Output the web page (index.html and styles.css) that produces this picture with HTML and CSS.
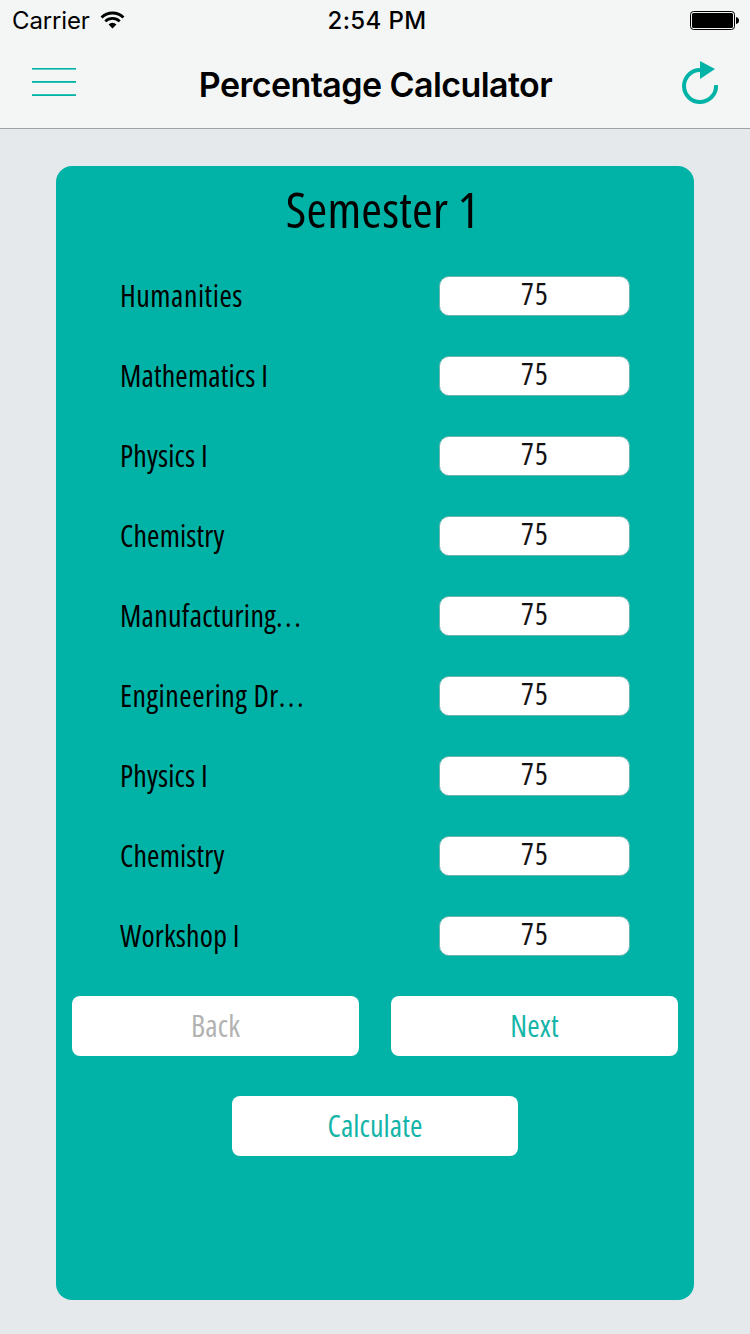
FILE: index.html
```html
<!DOCTYPE html>
<html lang="en">
<head>
<meta charset="utf-8">
<title>Percentage Calculator</title>
<link rel="stylesheet" href="styles.css">
</head>
<body>
<header class="top">
  <div class="status">
    <div class="status-left">
      <span class="carrier">Carrier</span>
      <svg class="wifi" width="25" height="20" viewBox="0 0 26 20" fill="none" stroke="#000">
        <path d="M1.600 7.400a16.300 16.300 0 0 1 22.800 0" stroke-width="3"/>
        <path d="M5.500 11.400a10.800 10.800 0 0 1 15 0" stroke-width="2.800"/>
        <path d="M13 18.800l-4.100-4.200a6 6 0 0 1 8.200 0z" fill="#000" stroke="none"/>
      </svg>
    </div>
    <span class="time">2:54 PM</span>
    <svg class="battery" width="50" height="20" viewBox="0 0 50 20">
      <rect x=".5" y="1.500" width="44" height="18" rx="3" fill="none" stroke="#000"/>
      <rect x="2" y="3" width="41" height="15" rx="1.500"/>
      <path d="M46 7q3 .5 3 3.500t-3 3.500z"/>
    </svg>
  </div>
  <nav class="bar">
    <svg class="menu" width="44" height="30" viewBox="0 0 44 30" fill="#01b3a6">
      <rect y="1" width="44" height="1.600"/>
      <rect y="14" width="44" height="1.800"/>
      <rect y="27.200" width="44" height="1.800"/>
    </svg>
    <h1 class="title">Percentage Calculator</h1>
    <svg class="refresh" width="38" height="44" viewBox="0 0 38 44">
      <path d="M35 24a16 16 0 1 1-16-15" fill="none" stroke="#01b3a6" stroke-width="4"/>
      <path d="M19 0l15 8-15 10z" fill="#01b3a6"/>
    </svg>
  </nav>
</header>
<main class="card">
  <h2 class="semester">Semester 1</h2>
  <ul class="subjects">
    <li class="row"><span class="label wide">Humanities</span><span class="field">75</span></li>
    <li class="row"><span class="label">Mathematics I</span><span class="field">75</span></li>
    <li class="row"><span class="label">Physics I</span><span class="field">75</span></li>
    <li class="row"><span class="label">Chemistry</span><span class="field">75</span></li>
    <li class="row"><span class="label clipped">Manufacturing<span class="dots">...</span></span><span class="field">75</span></li>
    <li class="row"><span class="label wide">Engineering Dr<span class="dots">...</span></span><span class="field">75</span></li>
    <li class="row"><span class="label">Physics I</span><span class="field">75</span></li>
    <li class="row"><span class="label">Chemistry</span><span class="field">75</span></li>
    <li class="row"><span class="label">Workshop I</span><span class="field">75</span></li>
  </ul>
  <div class="actions">
    <button class="btn disabled">Back</button>
    <button class="btn">Next</button>
  </div>
  <button class="btn calculate">Calculate</button>
</main>
</body>
</html>
```
FILE: styles.css
```css
* { box-sizing: border-box; margin: 0; padding: 0; }

body {
  width: 750px;
  height: 1334px;
  overflow: hidden;
  background: #e5e9ec;
  color: #000;
  font-family: "Open Sans", sans-serif;
  font-stretch: 75%;
}

svg { display: block; }

.top {
  height: 129px;
  background: #f4f6f5;
  border-bottom: 1px solid #9fa4a8;
  font-family: Inter, sans-serif;
  font-stretch: 100%;
}

.status {
  display: grid;
  grid-template-columns: 1fr auto 1fr;
  align-items: center;
  height: 40px;
  padding: 0 10px 0 12px;
  font-size: 24px;
  line-height: 38px;
}
.status-left { display: flex; align-items: center; gap: 10px; }
.carrier { padding-top: 2px; letter-spacing: -0.15px; }
.time { padding: 2px 0 0 2px; font-weight: 500; letter-spacing: 0.35px; }
.battery { justify-self: end; }

.bar {
  display: grid;
  grid-template-columns: 44px 1fr 38px;
  align-items: center;
  height: 88px;
  padding: 0 31px 0 32px;
}
.menu { margin-top: -6px; }
.title {
  padding-right: 6px;
  text-align: center;
  font-size: 34px;
  font-weight: 600;
  line-height: 90px;
  letter-spacing: -0.57px;
}
.refresh { margin-top: -4px; }

.card {
  display: flex;
  flex-direction: column;
  width: 638px;
  height: 1134px;
  margin: 37px 0 0 56px;
  padding: 0 16px;
  border-radius: 16px;
  background: #01b3a6;
}

.semester {
  height: 90px;
  padding-left: 15px;
  text-align: center;
  font-size: 50px;
  font-weight: 400;
  line-height: 86px;
  letter-spacing: 0.2px;
}

.subjects { list-style: none; }
.row {
  display: flex;
  align-items: center;
  justify-content: space-between;
  height: 80px;
  padding: 0 48px;
  font-size: 30px;
}
.label { padding-bottom: 1px; line-height: 40px; letter-spacing: 0.15px; }
.label.wide { letter-spacing: 0.5px; }
.label.clipped { letter-spacing: 0.3px; }
.label .dots { letter-spacing: 2.4px; }
.field {
  width: 191px;
  height: 40px;
  padding-left: 1px;
  border: 1px solid #6bb5ae;
  border-radius: 10px;
  background: #fff;
  color: #111;
  text-align: center;
  line-height: 34px;
  letter-spacing: 1.2px;
}

.actions { display: flex; gap: 32px; margin-top: 20px; }
.btn {
  width: 287px;
  height: 60px;
  padding-bottom: 1px;
  border: 0;
  border-radius: 8px;
  background: #fff;
  color: #14b5a8;
  font: inherit;
  font-size: 30px;
  letter-spacing: 0.1px;
}
.disabled { color: #b2b2b2; }
.calculate { align-self: center; width: 286px; margin-top: 40px; }
```
